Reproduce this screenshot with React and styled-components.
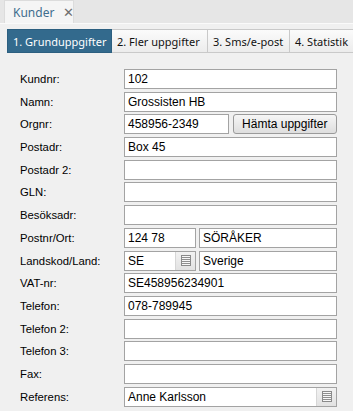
import React from "react";
import styled, { createGlobalStyle } from "styled-components";

const Global = createGlobalStyle`
  html, body { margin: 0; padding: 0; background: #f0f0f0; overflow: hidden; }
  * { box-sizing: border-box; }
`;

const Page = styled.div`
  width: 353px;
  height: 411px;
  background: #f0f0f0;
  font-family: "Liberation Sans", Arial, sans-serif;
`;

const TopBar = styled.div`
  height: 24px;
  background: #e6e6e6;
  border-bottom: 1px solid #fafafa;
  display: flex;
  align-items: flex-end;
  padding-left: 4px;
`;

const DocTab = styled.div`
  width: 70px;
  height: 23px;
  background: #f5f5f5;
  border: 1px solid #dcdcdc;
  border-bottom: none;
  display: flex;
  align-items: center;
  padding-left: 8px;
  gap: 9px;
  font-family: "Noto Sans", "Open Sans", sans-serif;
  font-size: 12px;
  color: #3f6d8e;
`;

const Close = styled.span`
  color: #6f6f6f;
  font-size: 13px;
  line-height: 1;
`;

const TabStrip = styled.div`
  display: flex;
  margin: 5px 0 0 7px;
  height: 24px;
`;

const Tab = styled.div`
  width: ${(p) => p.$w}px;
  flex: none;
  height: 24px;
  display: flex;
  align-items: center;
  padding-left: 5px;
  font-family: "Noto Sans", "Open Sans", sans-serif;
  font-size: 11px;
  white-space: nowrap;
  overflow: hidden;
  color: ${(p) => (p.$active ? "#ffffff" : "#111")};
  background: ${(p) =>
    p.$active ? "#336a8d" : "linear-gradient(#fbfbfb, #ececec)"};
  border: 1px solid ${(p) => (p.$active ? "#2c5f80" : "#c9c9c9")};
  border-left: ${(p) => (p.$first ? "1px solid #2c5f80" : "none")};
`;

const Form = styled.div`
  display: grid;
  grid-template-columns: 104px 213px;
  row-gap: 2.7px;
  margin: 16px 0 0 20px;
`;

const Label = styled.div`
  height: 20px;
  display: flex;
  align-items: center;
  font-size: 11.3px;
  color: #000;
`;

const Input = styled.div`
  height: 20px;
  min-width: 0;
  background: #fff;
  border: 1px solid #a3a3a3;
  display: flex;
  align-items: center;
  font-size: 12px;
  color: #000;
  padding-left: 3px;
  overflow: hidden;
  white-space: nowrap;
`;

const Text = styled.span`
  flex: 1;
`;

const Split = styled.div`
  display: grid;
  grid-template-columns: ${(p) => p.$cols};
  gap: ${(p) => p.$gap}px;
`;

const Button = styled.div`
  height: 20px;
  border: 1px solid #9a9a9a;
  border-radius: 3px;
  background: linear-gradient(#f6f6f6, #dedede);
  display: flex;
  align-items: center;
  justify-content: center;
  font-size: 12px;
  color: #000;
`;

const DropBtn = styled.div`
  width: 20px;
  height: 18px;
  flex: none;
  border-left: 1px solid #d6d6d6;
  background: linear-gradient(#f2f2f2, #e2e2e2);
  display: flex;
  align-items: center;
  justify-content: center;
`;

const ListIcon = () => (
  <svg width="10" height="11" viewBox="0 0 10 11">
    <rect x="0.5" y="0.5" width="9" height="10" fill="#f7f7f7" stroke="#8a8a8a" />
    {[2, 4, 6, 8].map((y) => (
      <line key={y} x1="1" x2="9" y1={y + 0.5} y2={y + 0.5} stroke="#8f8f8f" />
    ))}
  </svg>
);

const Drop = () => (
  <DropBtn>
    <ListIcon />
  </DropBtn>
);

const rows = [
  ["Kundnr:", "102"],
  ["Namn:", "Grossisten HB"],
  ["Orgnr:", "org"],
  ["Postadr:", "Box 45"],
  ["Postadr 2:", ""],
  ["GLN:", ""],
  ["Besöksadr:", ""],
  ["Postnr/Ort:", "postnr"],
  ["Landskod/Land:", "land"],
  ["VAT-nr:", "SE458956234901"],
  ["Telefon:", "078-789945"],
  ["Telefon 2:", ""],
  ["Telefon 3:", ""],
  ["Fax:", ""],
  ["Referens:", "ref"],
];

function Field({ v }) {
  if (v === "org")
    return (
      <Split $cols="1fr 1fr" $gap={4}>
        <Input>458956-2349</Input>
        <Button>Hämta uppgifter</Button>
      </Split>
    );
  if (v === "postnr")
    return (
      <Split $cols="72px 1fr" $gap={3}>
        <Input>124 78</Input>
        <Input>SÖRÅKER</Input>
      </Split>
    );
  if (v === "land")
    return (
      <Split $cols="72px 1fr" $gap={3}>
        <Input>
          <Text>SE</Text>
          <Drop />
        </Input>
        <Input>Sverige</Input>
      </Split>
    );
  if (v === "ref")
    return (
      <Input>
        <Text>Anne Karlsson</Text>
        <Drop />
      </Input>
    );
  return <Input>{v}</Input>;
}

export default function App() {
  return (
    <Page>
      <Global />
      <TopBar>
        <DocTab>
          Kunder <Close>✕</Close>
        </DocTab>
      </TopBar>
      <TabStrip>
        <Tab $w={105} $active $first>1. Grunduppgifter</Tab>
        <Tab $w={96}>2. Fler uppgifter</Tab>
        <Tab $w={82}>3. Sms/e-post</Tab>
        <Tab $w={70}>4. Statistik</Tab>
      </TabStrip>
      <Form>
        {rows.map(([l, v]) => (
          <React.Fragment key={l}>
            <Label>{l}</Label>
            <Field v={v} />
          </React.Fragment>
        ))}
      </Form>
    </Page>
  );
}
